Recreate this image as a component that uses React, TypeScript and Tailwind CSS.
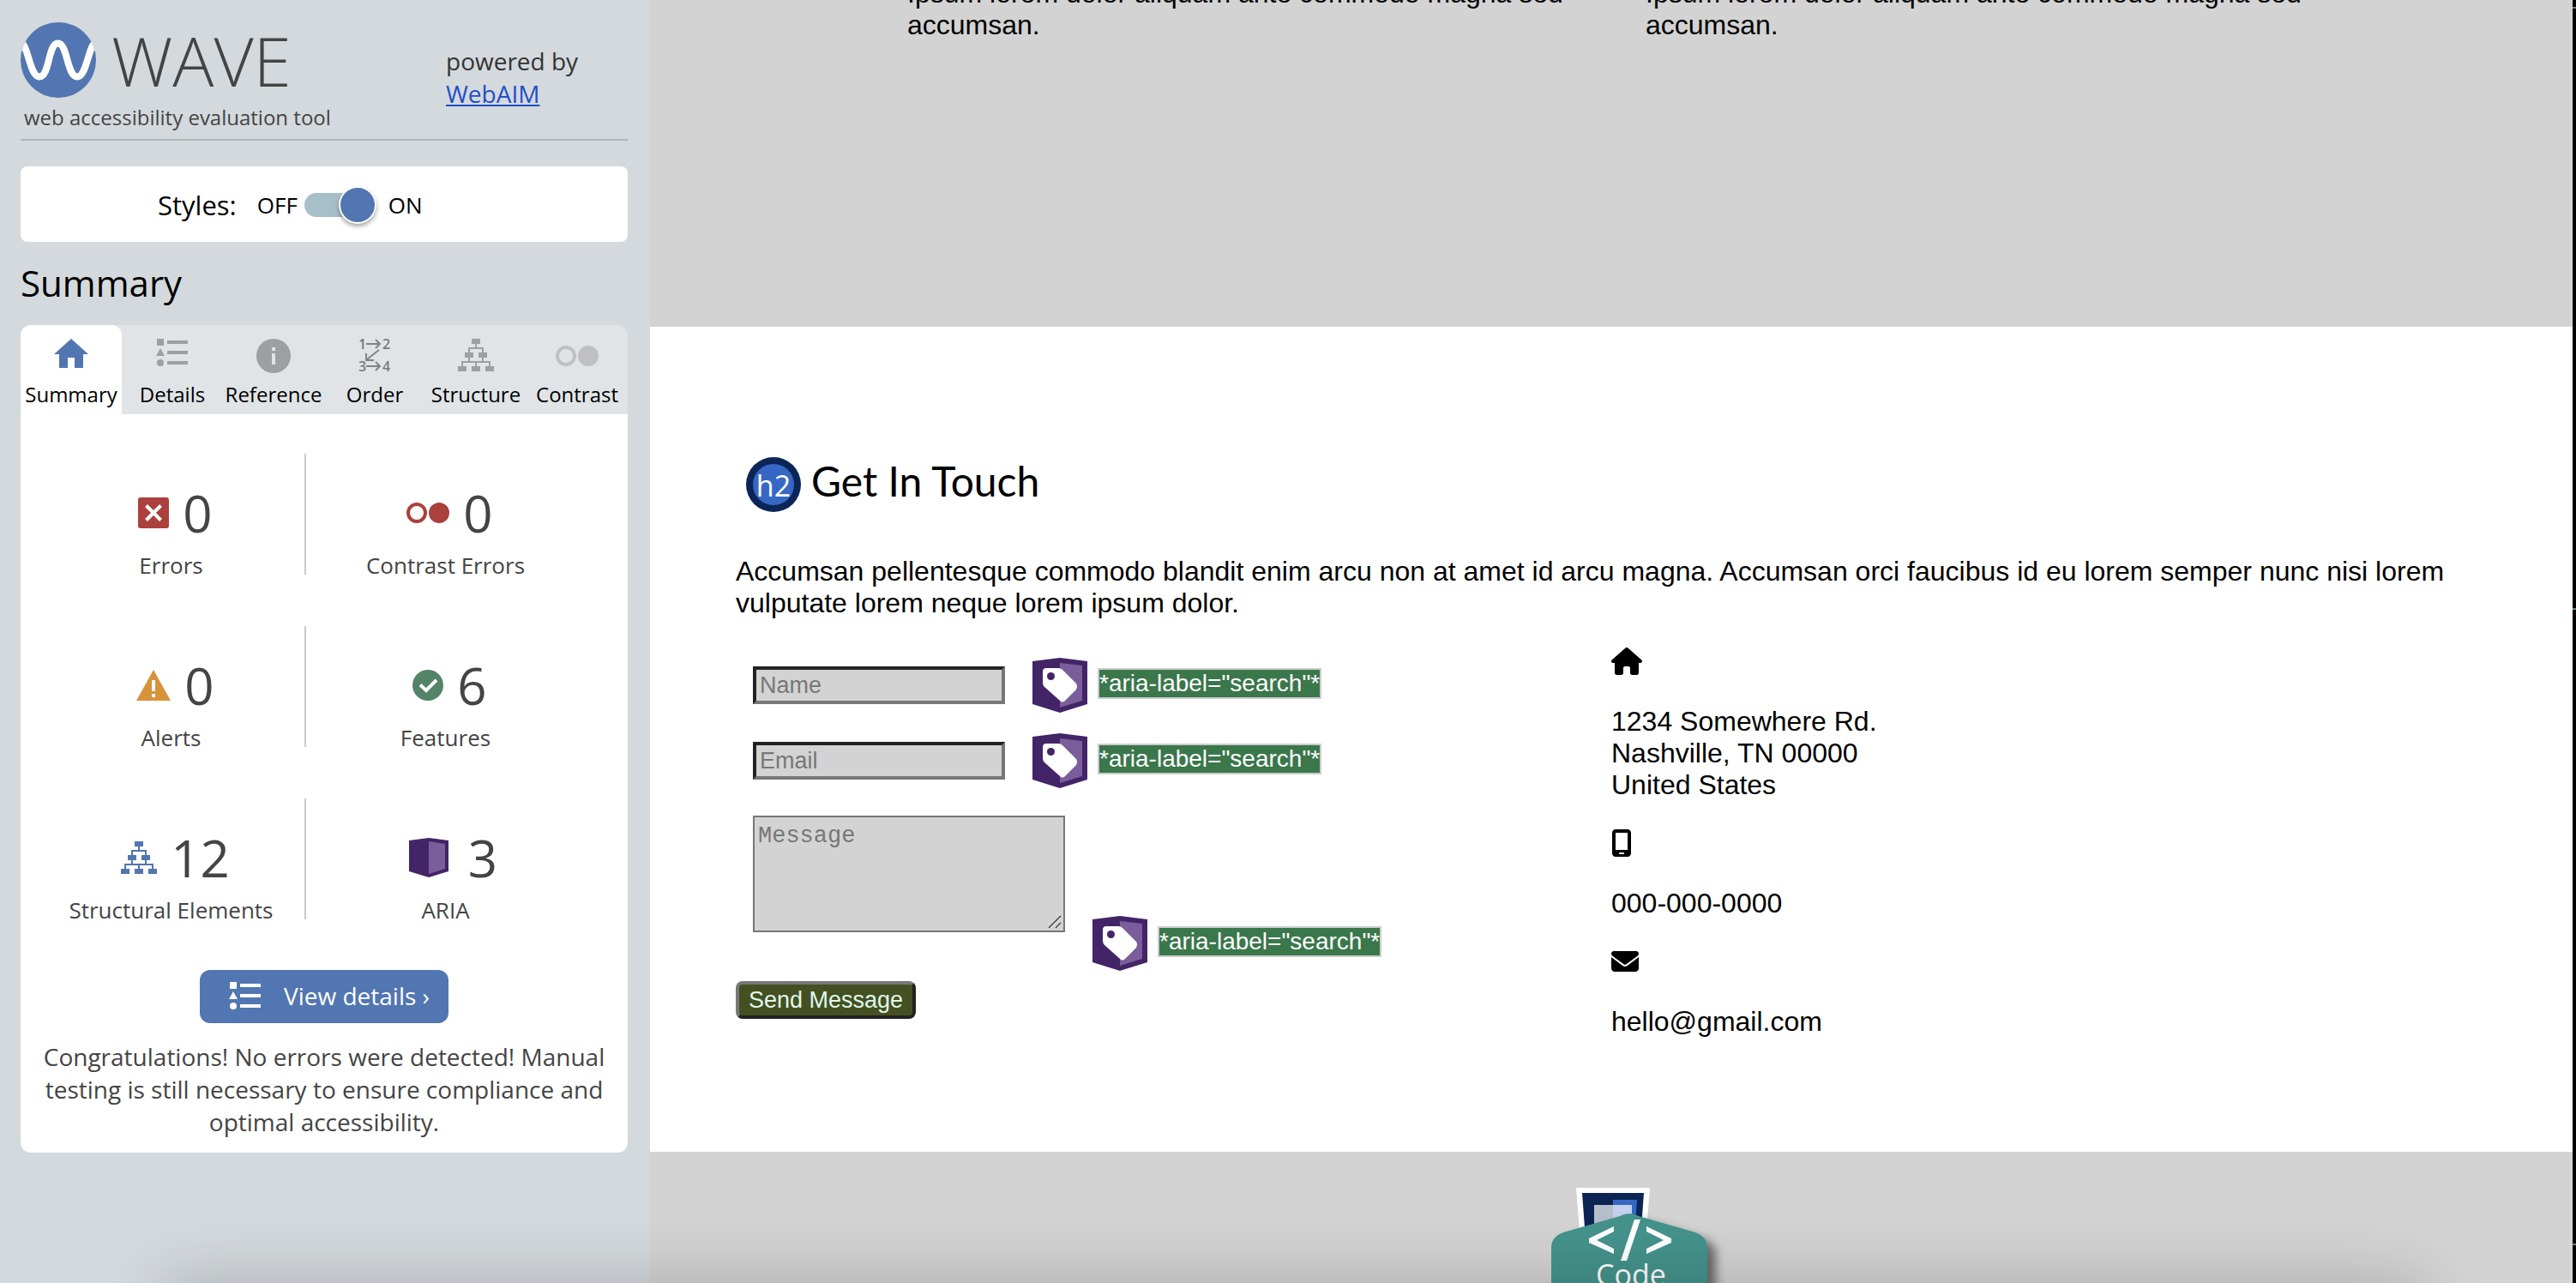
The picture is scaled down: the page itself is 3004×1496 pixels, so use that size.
import React from "react";
import { FaHouse, FaMobileScreen, FaEnvelope } from "react-icons/fa6";

const sans = "font-['Open_Sans',sans-serif]";

function WaveLogo() {
  return (
    <svg viewBox="0 0 88 88" className="size-[88px]" aria-hidden="true">
      <clipPath id="disc"><circle cx="44" cy="44" r="44" /></clipPath>
      <circle cx="44" cy="44" r="44" fill="#5276b1" />
      <path d="M-2 22 C9 22 10 63.500 22 63.500 C34 63.500 32 24.500 43.500 24.500 C55 24.500 54 63.500 66 63.500 C78 63.500 79 22 90 22" fill="none" stroke="#fff" strokeWidth="8" clipPath="url(#disc)" />
    </svg>
  );
}

function HomeIcon() {
  return (
    <svg viewBox="0 0 40 34" className="h-[34px] w-10" fill="#5276b1" aria-hidden="true">
      <path d="M20 0 40 18H34V34H24V22H16V34H6V18H0Z" />
    </svg>
  );
}

function ListIcon() {
  return (
    <svg viewBox="0 0 38 32" className="h-8 w-[38px]" fill="currentColor" aria-hidden="true">
      <path d="M1 0H9V8H1ZM13 2H37V6H13ZM5 11 10 20H0ZM13 14H37V18H13ZM13 26H37V30H13Z" />
      <circle cx="5" cy="28" r="4" />
    </svg>
  );
}

function InfoIcon() {
  return (
    <svg viewBox="0 0 40 40" className="size-10" aria-hidden="true">
      <circle cx="20" cy="20" r="20" fill="#9d9fa1" />
      <path d="M18 10H22V14H18ZM18 17H22V30H18Z" fill="#e0e4e6" />
    </svg>
  );
}

function OrderIcon() {
  return (
    <svg viewBox="0 0 38 40" className="h-10 w-[38px] overflow-visible" aria-hidden="true">
      <g className="font-['Open_Sans',sans-serif] text-base font-semibold" fill="#77797b">
        <text x="0" y="12">1</text>
        <text x="28" y="12">2</text>
        <text x="0" y="38">3</text>
        <text x="28" y="38">4</text>
      </g>
      <g fill="none" stroke="#808284" strokeWidth="2">
        <path d="M9 6H25M20 1 25 6 20 11M9 32H25M20 27 25 32 20 37M24 13 10 24M9 17V25H18" />
      </g>
    </svg>
  );
}

function StructureIcon() {
  return (
    <svg viewBox="0 0 42 38" className="h-[38px] w-[42px]" aria-hidden="true">
      <path d="M16 0H26V6H16ZM8 16H18V22H8ZM24 16H34V22H24ZM0 32H10V38H0ZM16 32H26V38H16ZM32 32H42V38H32Z" fill="currentColor" />
      <path d="M21 5V11M13 17V11H29V17M13 21V27M29 21V27M5 33V27H37V33M21 27V33" fill="none" stroke="currentColor" strokeWidth="2" />
    </svg>
  );
}

function ContrastIcon() {
  return (
    <svg viewBox="0 0 50 24" className="h-6 w-[50px]" aria-hidden="true">
      <circle cx="12" cy="12" r="10" fill="none" stroke="currentColor" strokeWidth="4" />
      <circle cx="38" cy="12" r="12" fill="currentColor" />
    </svg>
  );
}

function ErrorIcon() {
  return (
    <svg viewBox="0 0 36 36" className="size-9" aria-hidden="true">
      <rect width="36" height="36" rx="3" fill="#ab403c" />
      <path d="M9.500 9.500 26.500 26.500M26.500 9.500 9.500 26.500" stroke="#fff" strokeWidth="4" />
    </svg>
  );
}

function AlertIcon() {
  return (
    <svg viewBox="0 0 40 36" className="h-9 w-10" aria-hidden="true">
      <path d="M20 0 40 36H0Z" fill="#d8923a" />
      <path d="M18 12H22V25H18ZM18 28H22V32H18Z" fill="#fff" />
    </svg>
  );
}

function FeatureIcon() {
  return (
    <svg viewBox="0 0 36 36" className="size-9" aria-hidden="true">
      <circle cx="18" cy="18" r="18" fill="#548467" />
      <path d="M9 17.500 16 24 28 12" fill="none" stroke="#fff" strokeWidth="4" />
    </svg>
  );
}

function AriaIcon() {
  return (
    <svg viewBox="-7 0 61 48" className="h-12 w-[61px]" aria-hidden="true">
      <path d="M24 1 47 4V40L24 47 1 40V4Z" fill="#432467" />
      <path d="M24 5 43 8V37L24 43Z" fill="#7a5d9a" />
    </svg>
  );
}

function LabelIcon() {
  return (
    <svg viewBox="0 0 64 64" className="size-16" role="img" aria-label="ARIA label">
      <path d="M32 0 64 4V54L32 64 0 54V4Z" fill="#432467" />
      <path d="M32 6 58 9V50L32 58Z" fill="#7a5d9a" />
      <path d="M16 12H30Q33 12 35 14L51 30Q53 33 51 37L38 50Q35 53 32 50L14 34Q12 32 12 29V16Q12 12 16 12Z" fill="#fff" />
      <circle cx="21.500" cy="21.500" r="4.500" fill="#432467" />
    </svg>
  );
}

const tabs = [
  { name: "Summary", icon: <HomeIcon /> },
  { name: "Details", icon: <ListIcon /> },
  { name: "Reference", icon: <InfoIcon /> },
  { name: "Order", icon: <OrderIcon /> },
  { name: "Structure", icon: <StructureIcon /> },
  { name: "Contrast", icon: <ContrastIcon />, dim: true },
];

const counts = [
  { name: "Errors", count: 0, icon: <ErrorIcon /> },
  { name: "Contrast Errors", count: 0, icon: <ContrastIcon />, color: "text-[#ab403c]" },
  { name: "Alerts", count: 0, icon: <AlertIcon /> },
  { name: "Features", count: 6, icon: <FeatureIcon /> },
  { name: "Structural Elements", count: 12, icon: <StructureIcon />, color: "text-[#5276b1]" },
  { name: "ARIA", count: 3, icon: <AriaIcon /> },
];

function Sidebar() {
  return (
    <aside className={`${sans} w-[758px] shrink-0 bg-[#d4d9dd] px-6 pr-[26px] text-[#444]`}>
      <header className="flex h-[164px] justify-between border-b-2 border-[#b0b7ba] pt-[26px]">
        <div>
          <div className="flex h-[88px] items-center gap-[18px]">
            <WaveLogo />
            <span className="text-[80px] leading-[88px] font-light">WAVE</span>
          </div>
          <p className="pl-1 text-2xl leading-[46px]">web accessibility evaluation tool</p>
        </div>
        <p className="w-[212px] pt-[26px] text-[28px] leading-[38px] text-[#333]">
          powered by<br />
          <a href="#webaim" className="text-[#1f50c8] underline">WebAIM</a>
        </p>
      </header>

      <label className="mt-[30px] flex h-[88px] items-center rounded-lg bg-white pt-0.5 pl-40 text-black">
        <span className="text-[31px]">Styles:</span>
        <span className="ml-6 text-[26px]">OFF</span>
        <input
          type="checkbox"
          role="switch"
          defaultChecked
          className="ml-2 flex h-7 w-[84px] appearance-none items-center justify-end rounded-full bg-[#a6bfc9] before:size-11 before:rounded-full before:border-2 before:border-white before:bg-[#5276b1] before:shadow-[0_3px_5px_rgba(0,0,0,0.35)]"
        />
        <span className="ml-3.5 text-[26px]">ON</span>
      </label>

      <h1 className="mt-[18px] mb-[19px] text-[42px] leading-[60px] text-black">Summary</h1>

      <div className="grid grid-cols-6 rounded-t-xl bg-[#e0e4e6] text-2xl text-black" role="tablist">
        {tabs.map((t, i) => (
          <button
            key={t.name}
            role="tab"
            aria-selected={i === 0}
            className={`flex h-[104px] flex-col items-center justify-start whitespace-nowrap rounded-t-xl ${i === 0 ? "bg-white" : ""}`}
          >
            <span className={`flex h-[71px] items-start ${t.dim ? "pt-6 text-[#bfc0c3]" : "pt-4 text-[#9d9fa1]"}`}>{t.icon}</span>
            <span className="leading-5">{t.name}</span>
          </button>
        ))}
      </div>

      <section className="rounded-b-xl bg-white pb-[5px]">
        <ul className="grid grid-cols-[333px_325px] gap-y-[60px] pt-[46px]">
          {counts.map((c, i) => (
            <li
              key={c.name}
              className={`flex h-[141px] flex-col items-center justify-end ${i % 2 === 0 ? "border-r-2 border-[#c8c9ca] pl-5" : ""}`}
            >
              <div className="flex h-[74px] items-center gap-4 pl-2.5">
                <span className={c.color}>{c.icon}</span>
                <span className="text-[60px] leading-[74px]">{c.count}</span>
              </div>
              <span className="mt-1 -mb-[9px] text-[26px] leading-10">{c.name}</span>
            </li>
          ))}
        </ul>
        <div className="mt-[59px] flex justify-center">
          <button className="flex h-[62px] items-center rounded-xl bg-[#5276b1] pr-[22px] pb-0.5 pl-[34px] text-[28px] text-white">
            <ListIcon />
            <span className="ml-[26px]">View details ›</span>
          </button>
        </div>
        <p className="mt-5 px-5 pb-[12px] text-center text-[28px] leading-[38px]">
          Congratulations! No errors were detected! Manual testing is still necessary to ensure compliance and optimal accessibility.
        </p>
      </section>
    </aside>
  );
}

function AriaTag() {
  return (
    <span className="flex items-center gap-3">
      <LabelIcon />
      <span className="mb-1 border-2 border-[#ccc] bg-[#3a774b] text-[28px] leading-8 text-white">*aria-label="search"*</span>
    </span>
  );
}

const fieldStyle =
  "h-11 w-[294px] border-4 border-t-[#222] border-r-[#777] border-b-[#777] border-l-[#222] bg-[#d3d3d3] px-1 text-[27px] placeholder:text-[#777]";

function ContactForm() {
  return (
    <form className="w-[1021px] shrink-0">
      <div className="ml-5 flex h-[88px] items-center gap-8">
        <input className={fieldStyle} placeholder="Name" aria-label="Name" />
        <AriaTag />
      </div>
      <div className="ml-5 flex h-[88px] items-center gap-8">
        <input className={fieldStyle} placeholder="Email" aria-label="Email" />
        <AriaTag />
      </div>
      <div className="mt-5 ml-5 flex h-[181px] items-start gap-8">
        <div className="relative flex">
          <textarea
            className="h-[136px] w-[364px] resize-none border-2 border-[#777] bg-[#d3d3d3] p-1 font-['Liberation_Mono',monospace] text-[27px] placeholder:text-[#777]"
            placeholder="Message"
            aria-label="Message"
          />
          <svg viewBox="0 0 16 16" className="pointer-events-none absolute right-1 bottom-1 size-4" aria-hidden="true">
            <path d="M1 15 15 1M9 15 15 9" stroke="#444" strokeWidth="1.500" />
            <path d="M3 15 15 3M11 15 15 11" stroke="#eee" strokeWidth="1" />
          </svg>
        </div>
        <span className="self-end"><AriaTag /></span>
      </div>
      <button
        type="button"
        className="mt-3 block h-11 rounded-lg border-4 border-t-[#777] border-r-[#222] border-b-[#222] border-l-[#777] bg-[#455022] px-[11px] text-[27px] leading-8 text-[#dff8ec]"
      >
        Send Message
      </button>
    </form>
  );
}

function CodeTab() {
  return (
    <svg viewBox="0 0 220 120" className="h-[120px] w-[220px] shrink-0" role="img" aria-label="Code">
      <defs>
        <filter id="cast" x="-20%" y="-20%" width="150%" height="150%">
          <feDropShadow dx="10" dy="8" stdDeviation="6" floodColor="#000" floodOpacity=".5" />
        </filter>
      </defs>
      <path d="M29 0H115L107 100H37Z" fill="#fff" />
      <path d="M36 6H108L101 100H43Z" fill="#0b2453" />
      <path d="M72 14H100L94 100H72Z" fill="#3767c5" />
      <path d="M50 20H94V60H50Z" fill="#fff" fillOpacity=".7" />
      <path d="M80 33Q91 27 102 33L168 52Q182 57 182 70V140H0V70Q0 57 14 52Z" fill="#45928c" filter="url(#cast)" />
      <path d="M73 45V51L53 61 73 71V77L44 64V59ZM97 37H104L88 85H81ZM111 45V51L131 61 111 71V77L140 64V59Z" fill="#fff" />
      <text x="93" y="114" textAnchor="middle" fill="#fff" className="font-['Open_Sans',sans-serif] text-[34px]">Code</text>
    </svg>
  );
}

export default function App() {
  return (
    <div className="relative flex h-screen overflow-hidden bg-white font-['Liberation_Sans',Arial,sans-serif] text-[32px] leading-[37px] text-black">
      <Sidebar />
      <main className="flex min-w-0 flex-1 flex-col">
        <section className="flex h-[381px] shrink-0 items-start gap-[61px] bg-[#d3d3d3] pl-[300px]">
          <p className="-mt-[26px] w-[800px]">Ipsum lorem dolor aliquam ante commodo magna sed accumsan.</p>
          <p className="-mt-[26px] w-[800px]">Ipsum lorem dolor aliquam ante commodo magna sed accumsan.</p>
        </section>
        <section className="h-[962px] shrink-0 bg-white px-[100px] pt-[152px]">
          <h2 className="flex items-center gap-3 pl-3 font-['Lato',sans-serif] text-5xl leading-[56px]">
            <svg viewBox="0 0 64 64" className="size-16" role="img" aria-label="Heading level 2">
              <circle cx="32" cy="32" r="32" fill="#0b2556" />
              <circle cx="32" cy="32" r="24" fill="#3767c5" />
              <text x="32" y="46" textAnchor="middle" fill="#fff" className="font-['Open_Sans',sans-serif] text-[34px]">h2</text>
            </svg>
            <span className="pb-2">Get In Touch</span>
          </h2>
          <p className="mt-[51px]">
            Accumsan pellentesque commodo blandit enim arcu non at amet id arcu magna. Accumsan orci faucibus id eu lorem semper nunc nisi lorem vulputate lorem neque lorem ipsum dolor.
          </p>
          <div className="mt-[33px] flex">
            <ContactForm />
            <address className="not-italic">
              <FaHouse className="h-8 w-9" />
              <p className="mt-9">1234 Somewhere Rd.<br />Nashville, TN 00000<br />United States</p>
              <FaMobileScreen className="mt-[33px] h-8 w-6" />
              <p className="mt-9">000-000-0000</p>
              <FaEnvelope className="mt-[33px] size-8" />
              <p className="mt-9">hello@gmail.com</p>
            </address>
          </div>
        </section>
        <footer className="flex flex-1 items-start justify-center bg-[#d3d3d3] pt-[42px] pl-20">
          <CodeTab />
        </footer>
      </main>
      <div className="w-1 shrink-0 bg-black pt-2">
        <div className="h-0.5 bg-[#5f8794]" />
        <div className="mt-[699px] h-0.5 bg-[#5f8794]" />
        <div className="mt-[739px] h-0.5 bg-[#5f8794]" />
      </div>
      <div className="pointer-events-none absolute top-full right-[180px] left-[190px] h-40 shadow-[0_0_80px_rgba(0,0,0,0.2)]" />
    </div>
  );
}
